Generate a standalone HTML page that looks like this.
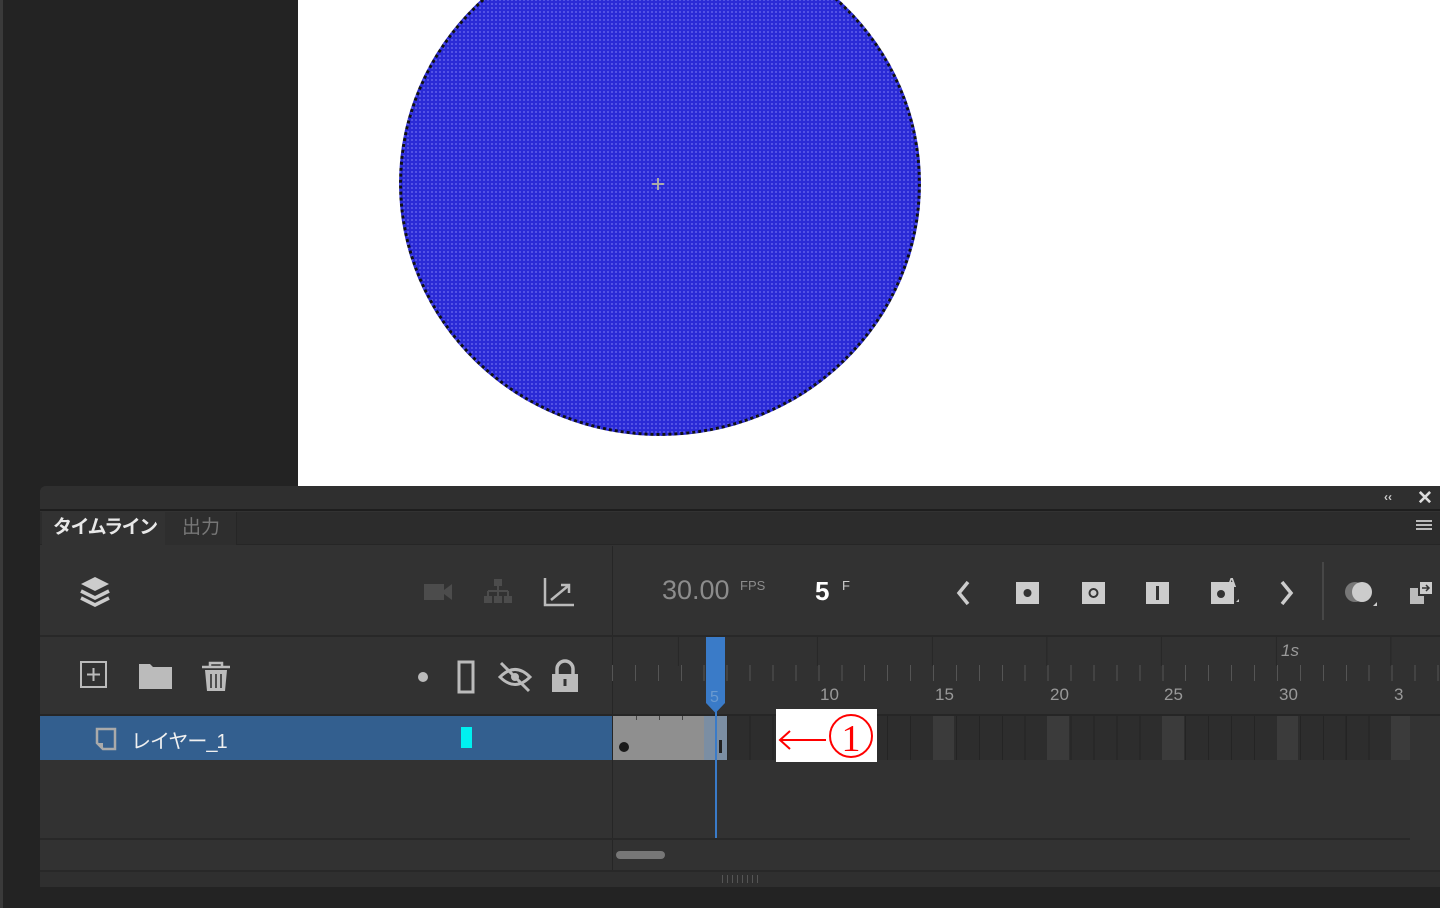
<!DOCTYPE html>
<html><head><meta charset="utf-8"><style>
*{margin:0;padding:0;box-sizing:border-box}
body{width:1440px;height:908px;background:#232323;position:relative;overflow:hidden;font-family:"Liberation Sans","Noto Sans CJK JP",sans-serif}
.a{position:absolute}
</style></head><body>
<div class="a" style="left:0;top:0;width:3px;height:908px;background:#3a3a3a"></div>
<div class="a" style="left:298px;top:0;width:1142px;height:486px;background:#fff"></div>
<div class="a" style="left:399px;top:-69px;width:522px;height:505px;border-radius:50%;background:#2a2ad6;border:3px dotted #111;background-image:radial-gradient(circle,#5a5ae8 0.8px,transparent 1.2px);background-size:4px 4px"></div>
<div class="a" style="left:652px;top:183px;width:12px;height:2px;background:#aaa"></div>
<div class="a" style="left:657px;top:178px;width:2px;height:12px;background:#aaa"></div>

<!-- panel -->
<div class="a" style="left:40px;top:486px;width:1400px;height:401px;background:#323232;border-radius:6px 0 0 0"></div>
<div class="a" style="left:40px;top:486px;width:1400px;height:25px;background:#2f2f2f;border-radius:6px 0 0 0;border-bottom:2px solid #1e1e1e"></div>
<div class="a" style="left:1384px;top:490px;color:#ccc;font-size:12px;font-weight:bold">‹‹</div>
<div class="a" style="left:1417px;top:487px;color:#ddd;font-size:19px;font-weight:bold">✕</div>
<div class="a" style="left:40px;top:512px;width:1400px;height:33px;background:#2c2c2c;border-bottom:1px solid #262626"></div>
<div class="a" style="left:42px;top:512px;width:123px;height:34px;background:#323232"></div>
<div class="a" style="left:165px;top:512px;width:72px;height:33px;background:#2e2e2e;border-right:1px solid #262626"></div>
<div class="a" style="left:53px;top:512px;color:#e8e8e8;font-size:19px;font-weight:bold;letter-spacing:-1.5px">タイムライン</div>
<div class="a" style="left:182px;top:512px;color:#777;font-size:19px">出力</div>
<div class="a" style="left:1416px;top:520px;width:16px;height:2px;background:#bbb;box-shadow:0 4px #bbb,0 8px #bbb"></div>

<!-- toolbar -->
<div class="a" style="left:612px;top:546px;width:1px;height:294px;background:#262626"></div>
<div class="a" style="left:40px;top:635px;width:1400px;height:2px;background:#282828"></div>
<svg class="a" style="left:78px;top:574px" width="34" height="36" viewBox="0 0 34 36"><path d="M17 3 L31 10 L17 17 L3 10Z" fill="#ccc"/><path d="M3 17 L17 24 L31 17" stroke="#ccc" stroke-width="3.5" fill="none"/><path d="M3 24 L17 31 L31 24" stroke="#ccc" stroke-width="3.5" fill="none"/></svg>
<svg class="a" style="left:420px;top:578px" width="36" height="28"><rect x="4" y="6" width="20" height="16" fill="#4c4c4c"/><path d="M24 12 L32 6 V22 L24 16Z" fill="#4c4c4c"/></svg>
<svg class="a" style="left:482px;top:576px" width="32" height="30"><rect x="12" y="3" width="8" height="7" fill="#4c4c4c"/><path d="M16 10 V15 M6 15 H26 M6 15 V20 M26 15 V20 M16 15 V20" stroke="#4c4c4c" stroke-width="2"/><rect x="2" y="20" width="8" height="7" fill="#4c4c4c"/><rect x="12" y="20" width="8" height="7" fill="#4c4c4c"/><rect x="22" y="20" width="8" height="7" fill="#4c4c4c"/></svg>
<svg class="a" style="left:542px;top:576px" width="34" height="32"><path d="M3 2 V29 H32" stroke="#bbb" stroke-width="2.5" fill="none"/><path d="M9 24 L26 10 M19 9 H27 V17" stroke="#bbb" stroke-width="2.5" fill="none"/></svg>

<div class="a" style="left:662px;top:575px;color:#8c8c8c;font-size:27px">30.00</div>
<div class="a" style="left:740px;top:578px;color:#8c8c8c;font-size:13px">FPS</div>
<div class="a" style="left:815px;top:576px;color:#fff;font-size:26px;font-weight:bold">5</div>
<div class="a" style="left:842px;top:578px;color:#ccc;font-size:13px">F</div>
<svg class="a" style="left:950px;top:576px" width="360" height="36">
<path d="M18 6 L9 17 L18 28" stroke="#ccc" stroke-width="3.5" fill="none"/>
<rect x="66" y="6" width="23" height="22" fill="#ccc"/><circle cx="77.5" cy="17" r="4" fill="#333"/>
<rect x="132" y="6" width="23" height="22" fill="#ccc"/><circle cx="143.5" cy="17" r="4" fill="none" stroke="#333" stroke-width="2"/>
<rect x="196" y="6" width="23" height="22" fill="#ccc"/><rect x="206" y="10" width="3" height="14" fill="#333"/>
<rect x="261" y="6" width="23" height="22" fill="#ccc"/><circle cx="271" cy="18" r="4" fill="#333"/><text x="277" y="11" font-size="13" fill="#ccc" font-family="Liberation Sans" font-weight="bold">A</text><path d="M286 26 L289 26 L289 23Z" fill="#ccc"/>
<path d="M332 6 L341 17 L332 28" stroke="#ccc" stroke-width="3.5" fill="none"/>
</svg>
<div class="a" style="left:1322px;top:562px;width:2px;height:58px;background:#474747"></div>
<svg class="a" style="left:1342px;top:578px" width="40" height="30"><circle cx="13" cy="14" r="10" fill="#777"/><circle cx="20" cy="14" r="10" fill="#ccc"/><path d="M31 28 L35 28 L35 24Z" fill="#ccc"/></svg>
<svg class="a" style="left:1408px;top:578px" width="32" height="30"><rect x="2" y="10" width="14" height="16" fill="#bbb"/><rect x="11" y="3" width="14" height="14" fill="#ccc" stroke="#323232" stroke-width="2"/><path d="M14 10 H21 M18 7 L21 10 L18 13" stroke="#333" stroke-width="1.5" fill="none"/></svg>

<!-- layer icons row -->
<svg class="a" style="left:78px;top:658px" width="520" height="38">
<rect x="3" y="4" width="25" height="25" fill="none" stroke="#bbb" stroke-width="2"/><path d="M15.5 10 V23 M9 16.5 H22" stroke="#bbb" stroke-width="2"/>
<path d="M61 6 H72 L75 9 H94 V31 H61Z" fill="#bbb"/>
<path d="M124 9 H152 M132 9 V5 H144 V9" stroke="#bbb" stroke-width="2.5" fill="none"/><path d="M127 12 H149 L147 33 H129Z" fill="#bbb"/><path d="M133 16 V30 M138 16 V30 M143 16 V30" stroke="#323232" stroke-width="1.6"/>
<circle cx="345" cy="19" r="5" fill="#bbb"/>
<rect x="381" y="4" width="14" height="30" fill="none" stroke="#bbb" stroke-width="3"/>
<path d="M422 19 Q437 4 452 19 Q437 34 422 19Z" fill="none" stroke="#bbb" stroke-width="3"/><circle cx="437" cy="19" r="4" fill="#bbb"/><path d="M423 5 L451 33" stroke="#bbb" stroke-width="3"/>
<path d="M479 17 V11 A8 8 0 0 1 495 11 V17" fill="none" stroke="#bbb" stroke-width="3.5"/><rect x="474" y="16" width="26" height="18" fill="#bbb"/><rect x="485.5" y="21" width="3" height="7" fill="#323232"/>
</svg>

<!-- ruler -->
<div class="a" style="left:613px;top:637px;width:827px;height:78px;background:#313131"></div>
<div class="a" style="left:613px;top:637px;width:827px;height:29px;background:repeating-linear-gradient(90deg,transparent 0 113.65px,#262626 113.65px 114.65px);background-position:90.35px 0"></div>
<div class="a" style="left:612px;top:665px;width:828px;height:16px;background:repeating-linear-gradient(90deg,#555 0 1px,transparent 1px 22.93px)"></div>
<div class="a" style="left:1281px;top:641px;color:#999;font-size:17px;font-style:italic">1s</div>
<div class="a" style="left:820px;top:685px;color:#999;font-size:17px">10</div>
<div class="a" style="left:935px;top:685px;color:#999;font-size:17px">15</div>
<div class="a" style="left:1050px;top:685px;color:#999;font-size:17px">20</div>
<div class="a" style="left:1164px;top:685px;color:#999;font-size:17px">25</div>
<div class="a" style="left:1279px;top:685px;color:#999;font-size:17px">30</div>
<div class="a" style="left:1394px;top:685px;color:#999;font-size:17px">3</div>
<div class="a" style="left:40px;top:714px;width:1400px;height:2px;background:#262626"></div>

<!-- layer row -->
<div class="a" style="left:40px;top:716px;width:572px;height:44px;background:#335f8f"></div>
<svg class="a" style="left:94px;top:726px" width="28" height="26"><path d="M3 3 H21 V23 H9 L3 17Z" fill="none" stroke="#aaa" stroke-width="2.5"/><path d="M3 17 H9 V23" fill="#aaa"/></svg>
<div class="a" style="left:131px;top:725px;color:#f0f0f0;font-size:20px;letter-spacing:-1px">レイヤー_1</div>
<div class="a" style="left:461px;top:727px;width:11px;height:21px;background:#00f0f0"></div>

<!-- frames -->
<div class="a" style="left:613px;top:716px;width:797px;height:44px;background:repeating-linear-gradient(90deg,#2d2d2d 0 21.9px,#242424 21.9px 22.93px)"></div>
<div class="a" style="left:932.6px;top:716px;width:21.9px;height:44px;background:#3b3b3b"></div>
<div class="a" style="left:1047.3px;top:716px;width:21.9px;height:44px;background:#3b3b3b"></div>
<div class="a" style="left:1161.9px;top:716px;width:21.9px;height:44px;background:#3b3b3b"></div>
<div class="a" style="left:1276.6px;top:716px;width:21.9px;height:44px;background:#3b3b3b"></div>
<div class="a" style="left:1391.2px;top:716px;width:18.8px;height:44px;background:#3b3b3b"></div>
<div class="a" style="left:613px;top:716px;width:114px;height:44px;background:#8f8f8f"></div>
<div class="a" style="left:704px;top:716px;width:23px;height:44px;background:#7b8ea3"></div>
<div class="a" style="left:636px;top:716px;width:1px;height:4px;background:#444;box-shadow:23px 0 #444,46px 0 #444"></div>
<div class="a" style="left:619px;top:742px;width:10px;height:10px;border-radius:50%;background:#1a1a1a"></div>
<div class="a" style="left:719px;top:740px;width:3px;height:13px;background:#222"></div>
<div class="a" style="left:40px;top:760px;width:1370px;height:78px;background:#323232"></div>
<div class="a" style="left:612px;top:760px;width:1px;height:80px;background:#262626"></div>
<div class="a" style="left:1410px;top:716px;width:30px;height:124px;background:#333"></div>
<div class="a" style="left:40px;top:838px;width:1370px;height:2px;background:#282828"></div>

<!-- playhead -->
<div class="a" style="left:715px;top:700px;width:2px;height:138px;background:#3a7bc8"></div>
<svg class="a" style="left:704px;top:637px" width="23" height="78"><path d="M2 0 H21 V66 L11.5 76 L2 66Z" fill="#3a7bc8"/><text x="6" y="65" font-size="16" fill="#6a9ad0" font-family="Liberation Sans">5</text></svg>

<!-- label -->
<div class="a" style="left:776px;top:709px;width:101px;height:53px;background:#fff"></div>
<svg class="a" style="left:776px;top:709px" width="101" height="53">
<path d="M4 31 H50" stroke="#f00" stroke-width="2"/><path d="M14 22 L4 31 L14 40" stroke="#f00" stroke-width="2" fill="none"/>
<circle cx="75" cy="27" r="21" fill="none" stroke="#f00" stroke-width="2"/>
<text x="75" y="42" text-anchor="middle" font-size="38" fill="#f00" font-family="Liberation Serif">1</text>
</svg>

<!-- scroll -->
<div class="a" style="left:612px;top:840px;width:1px;height:30px;background:#262626"></div>
<div class="a" style="left:616px;top:851px;width:49px;height:8px;border-radius:4px;background:#777"></div>
<div class="a" style="left:40px;top:870px;width:1400px;height:2px;background:#282828"></div>
<div class="a" style="left:40px;top:872px;width:1400px;height:15px;background:#2f2f2f"></div>
<div class="a" style="left:722px;top:875px;width:38px;height:8px;background:repeating-linear-gradient(90deg,#555 0 1px,transparent 1px 5px)"></div>
<div class="a" style="left:0;top:887px;width:1440px;height:21px;background:#232323"></div>
<div class="a" style="left:0;top:887px;width:3px;height:21px;background:#3a3a3a"></div>
</body></html>
